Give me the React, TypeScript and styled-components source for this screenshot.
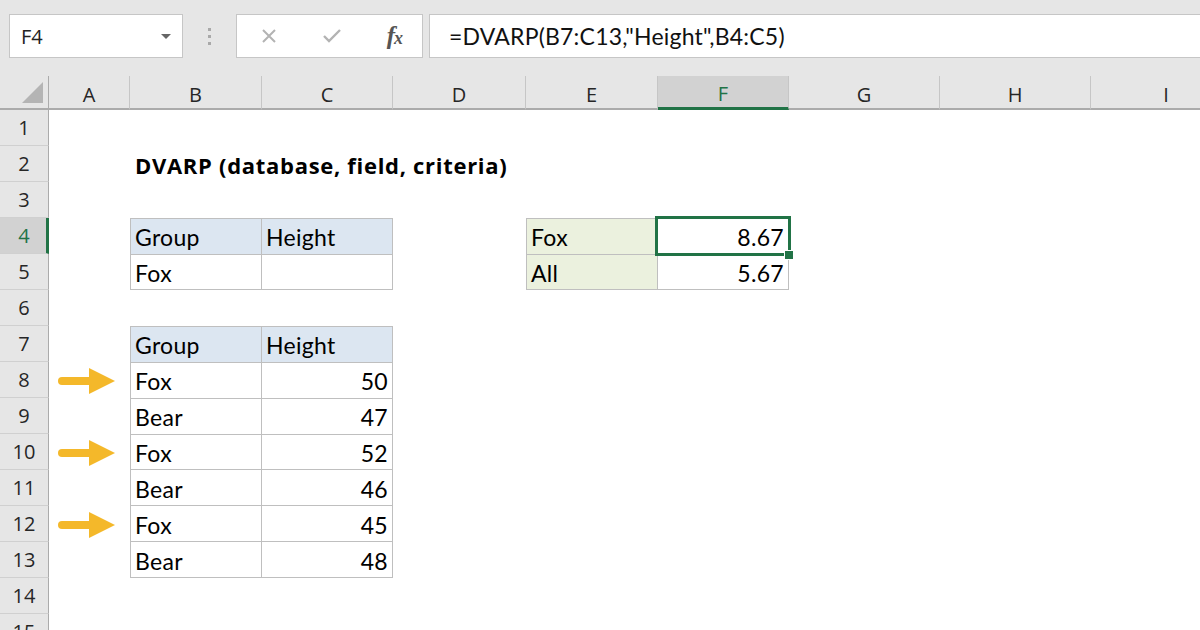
import React from "react";
import styled, { createGlobalStyle, css } from "styled-components";

const GlobalStyle = createGlobalStyle`
  html, body {
    margin: 0;
    padding: 0;
    background: #ffffff;
  }
  #root {
    width: 1200px;
    height: 630px;
    overflow: hidden;
  }
`;

const GREEN = "#217346";

const Window = styled.div`
  width: 1200px;
  height: 630px;
  overflow: hidden;
  display: flex;
  flex-direction: column;
  background: #ffffff;
  font-family: "Lato", "Liberation Sans", sans-serif;
  color: #000;
`;

/* ---------- formula bar ---------- */

const FormulaBar = styled.div`
  flex: none;
  height: 76px;
  box-sizing: border-box;
  padding: 14px 0 0 9px;
  background: #e6e6e6;
  display: flex;
  align-items: flex-start;
`;

const NameBox = styled.div`
  width: 174px;
  height: 44px;
  box-sizing: border-box;
  border: 1px solid #c6c6c6;
  background: #fff;
  display: flex;
  align-items: center;
  justify-content: space-between;
  padding: 0 11px 0 11px;
  font-family: "Open Sans", "Liberation Sans", sans-serif;
  font-size: 20px;
  color: #222;
`;

const DropCaret = styled.span`
  width: 0;
  height: 0;
  border-left: 5px solid transparent;
  border-right: 5px solid transparent;
  border-top: 5px solid #666;
`;

const Grip = styled.div`
  width: 53px;
  height: 44px;
  display: flex;
  flex-direction: column;
  align-items: center;
  justify-content: center;
  gap: 4px;

  span {
    width: 3px;
    height: 3px;
    background: #a9a9a9;
  }
`;

const ActionBox = styled.div`
  width: 187px;
  height: 44px;
  box-sizing: border-box;
  border: 1px solid #c6c6c6;
  background: #fff;
  display: flex;
  align-items: center;
  justify-content: space-between;
  padding: 0 20px 0 24px;
`;

const Fx = styled.span`
  font-family: "Liberation Serif", "DejaVu Serif", serif;
  font-style: italic;
  font-weight: bold;
  font-size: 25px;
  color: #555;
  letter-spacing: -1px;

  small {
    font-size: 18px;
  }
`;

const FormulaInput = styled.div`
  flex: 1;
  margin-left: 6px;
  margin-right: -2px;
  height: 44px;
  box-sizing: border-box;
  border: 1px solid #c6c6c6;
  background: #fff;
  display: flex;
  align-items: center;
  padding-left: 19px;
  font-size: 23px;
  letter-spacing: 0.2px;
  color: #111;
`;

/* ---------- sheet ---------- */

const Sheet = styled.div`
  flex: 1;
  display: grid;
  grid-template-columns: 49px 81px 132px 131px 133px 132px 131px 151px 151px 151px;
  grid-template-rows: 34px repeat(15, 36px);
  overflow: hidden;
`;

const headerText = css`
  font-family: "Open Sans", "Noto Sans", sans-serif;
  font-size: 20px;
  display: flex;
  align-items: center;
  justify-content: center;
  box-sizing: border-box;
`;

const Corner = styled.div`
  grid-row: 1;
  grid-column: 1;
  background: #e6e6e6;
  border-right: 1px solid #ababab;
  border-bottom: 2px solid #ababab;
  display: flex;
  align-items: flex-end;
  justify-content: flex-end;
  padding: 0 5px 5px 0;
  box-sizing: border-box;

  &::after {
    content: "";
    width: 21px;
    height: 21px;
    background: #b4b4b4;
    clip-path: polygon(100% 0, 100% 100%, 0 100%);
  }
`;

const ColHead = styled.div<{ $col: number; $active?: boolean }>`
  ${headerText};
  grid-row: 1;
  grid-column: ${(p) => p.$col};
  background: ${(p) => (p.$active ? "#d2d2d2" : "#e6e6e6")};
  color: ${(p) => (p.$active ? GREEN : "#262626")};
  border-right: 1px solid #c6c6c6;
  border-bottom: ${(p) => (p.$active ? `3px solid ${GREEN}` : "2px solid #ababab")};
  padding-top: 4px;
`;

const RowHead = styled.div<{ $row: number; $active?: boolean }>`
  ${headerText};
  grid-row: ${(p) => p.$row};
  grid-column: 1;
  background: ${(p) => (p.$active ? "#d2d2d2" : "#e6e6e6")};
  color: ${(p) => (p.$active ? GREEN : "#262626")};
  border-right: ${(p) => (p.$active ? `3px solid ${GREEN}` : "1px solid #ababab")};
  border-bottom: 1px solid #d0d0d0;
  padding-left: ${(p) => (p.$active ? "2px" : "0")};
`;

const Title = styled.div`
  grid-row: 3;
  grid-column: 3 / 8;
  display: flex;
  align-items: center;
  padding: 2px 0 0 5px;
  font-family: "Open Sans", "Lato", sans-serif;
  font-weight: bold;
  font-size: 22px;
  letter-spacing: 0.7px;
  white-space: nowrap;
`;

const DataTable = styled.div<{ $rows: string; $cols: string }>`
  grid-row: ${(p) => p.$rows};
  grid-column: ${(p) => p.$cols};
  display: grid;
  grid-template-columns: 1fr 1fr;
  grid-auto-rows: 1fr;
  gap: 1px;
  background: #bfbfbf;
  border: 1px solid #bfbfbf;
  position: relative;
`;

type Tone = "head" | "label" | "plain";

const toneBg: Record<Tone, string> = {
  head: "#dce6f1",
  label: "#ebf1de",
  plain: "#ffffff",
};

const Cell = styled.div<{ $tone?: Tone; $right?: boolean; $selected?: boolean }>`
  background: ${(p) => toneBg[p.$tone ?? "plain"]};
  display: flex;
  align-items: center;
  justify-content: ${(p) => (p.$right ? "flex-end" : "flex-start")};
  padding: 2px 4px 0 4px;
  font-size: 23px;
  letter-spacing: 0.3px;
  position: relative;

  ${(p) =>
    p.$selected &&
    css`
      z-index: 2;
      &::after {
        content: "";
        position: absolute;
        inset: -3px -3px -2px -3px;
        border: 3px solid ${GREEN};
        pointer-events: none;
      }
      &::before {
        content: "";
        position: absolute;
        right: -6px;
        bottom: -6px;
        width: 8px;
        height: 8px;
        background: ${GREEN};
        border: 1px solid #fff;
        z-index: 3;
      }
    `}
`;

const ArrowSlot = styled.div<{ $row: number }>`
  grid-row: ${(p) => p.$row};
  grid-column: 2;
  display: flex;
  align-items: center;
  padding: 2px 0 0 8px;
`;

const Arrow = () => (
  <svg width="60" height="30" viewBox="0 0 60 30">
    <line x1="5" y1="15" x2="36" y2="15" stroke="#f4b82a" strokeWidth="8" strokeLinecap="round" />
    <polygon points="32,2 58,15 32,28" fill="#f4b82a" />
  </svg>
);

const columns = ["A", "B", "C", "D", "E", "F", "G", "H", "I"];

const database: [string, number][] = [
  ["Fox", 50],
  ["Bear", 47],
  ["Fox", 52],
  ["Bear", 46],
  ["Fox", 45],
  ["Bear", 48],
];

export default function App() {
  return (
    <>
      <GlobalStyle />
      <Window>
        <FormulaBar>
          <NameBox>
            F4
            <DropCaret />
          </NameBox>
          <Grip>
            <span />
            <span />
            <span />
          </Grip>
          <ActionBox>
            <svg width="16" height="16" viewBox="0 0 16 16">
              <path d="M2 2 L14 14 M14 2 L2 14" stroke="#b3b3b3" strokeWidth="2" fill="none" />
            </svg>
            <svg width="20" height="16" viewBox="0 0 20 16">
              <path d="M2 8 L7 13 L18 2" stroke="#b3b3b3" strokeWidth="2.4" fill="none" />
            </svg>
            <Fx>
              f<small>x</small>
            </Fx>
          </ActionBox>
          <FormulaInput>=DVARP(B7:C13,"Height",B4:C5)</FormulaInput>
        </FormulaBar>

        <Sheet>
          <Corner />
          {columns.map((c, i) => (
            <ColHead key={c} $col={i + 2} $active={c === "F"}>
              {c}
            </ColHead>
          ))}
          {Array.from({ length: 15 }, (_, i) => (
            <RowHead key={i} $row={i + 2} $active={i + 1 === 4}>
              {i + 1}
            </RowHead>
          ))}

          <Title>DVARP (database, field, criteria)</Title>

          <DataTable $rows="5 / 7" $cols="3 / 5">
            <Cell $tone="head">Group</Cell>
            <Cell $tone="head">Height</Cell>
            <Cell>Fox</Cell>
            <Cell />
          </DataTable>

          <DataTable $rows="8 / 15" $cols="3 / 5">
            <Cell $tone="head">Group</Cell>
            <Cell $tone="head">Height</Cell>
            {database.map(([g, h], i) => (
              <React.Fragment key={i}>
                <Cell>{g}</Cell>
                <Cell $right>{h}</Cell>
              </React.Fragment>
            ))}
          </DataTable>

          <DataTable $rows="5 / 7" $cols="6 / 8">
            <Cell $tone="label">Fox</Cell>
            <Cell $right $selected>
              8.67
            </Cell>
            <Cell $tone="label">All</Cell>
            <Cell $right>5.67</Cell>
          </DataTable>

          {[9, 11, 13].map((r) => (
            <ArrowSlot key={r} $row={r}>
              <Arrow />
            </ArrowSlot>
          ))}
        </Sheet>
      </Window>
    </>
  );
}
